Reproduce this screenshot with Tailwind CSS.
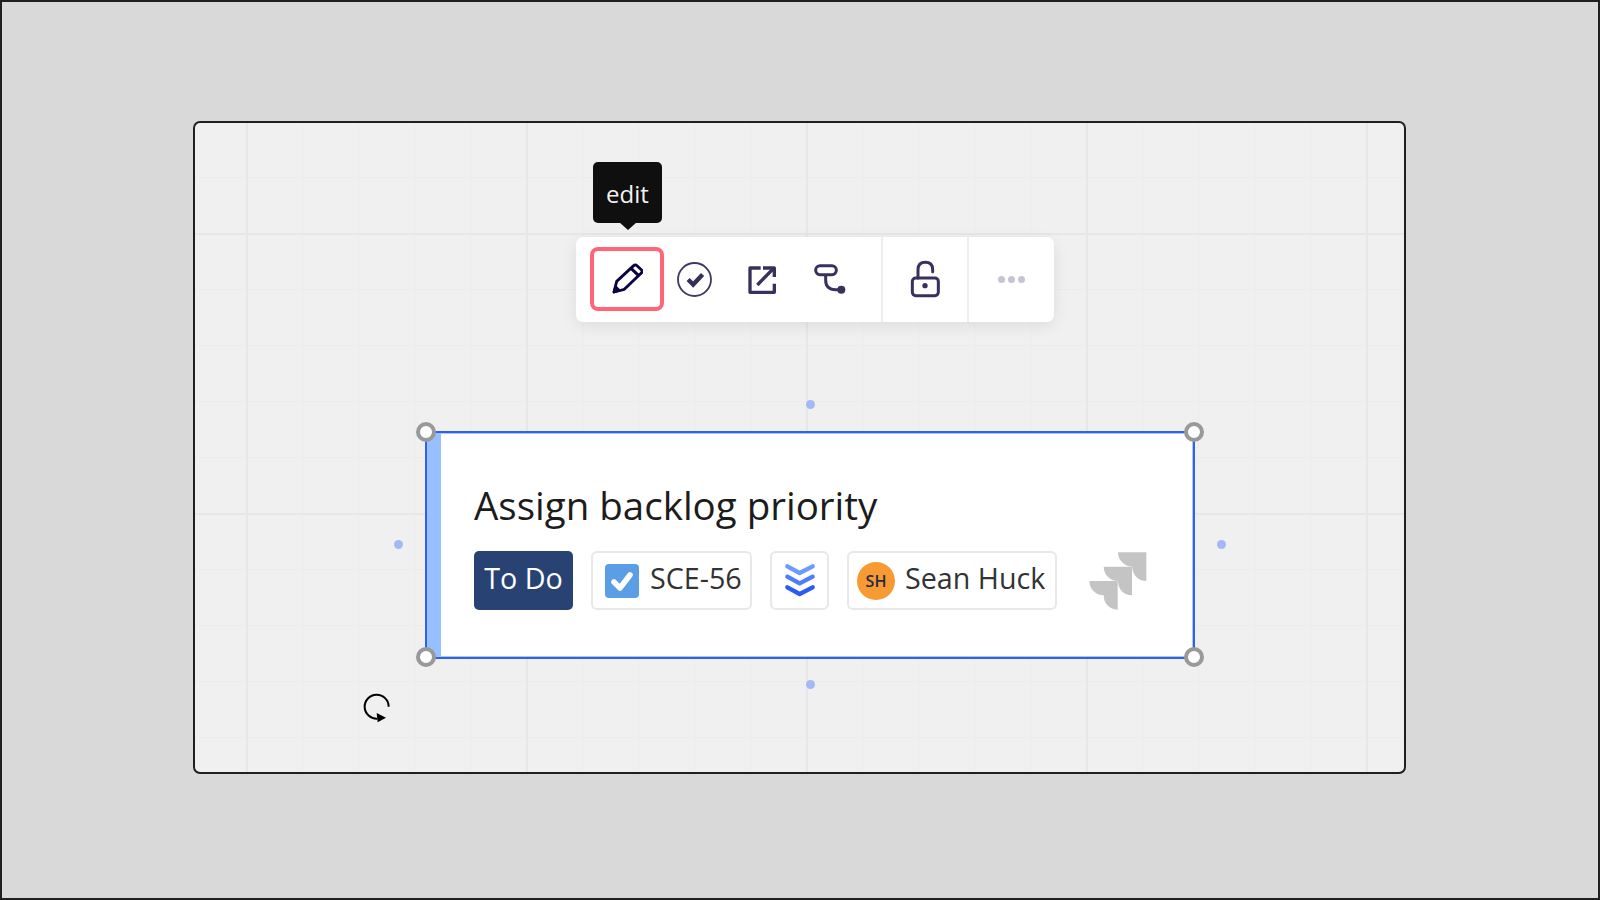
<!DOCTYPE html>
<html lang="en">
<head>
<meta charset="utf-8">
<title>Jira card</title>
<script src="https://cdn.jsdelivr.net/npm/@tailwindcss/browser@4"></script>
</head>
<body class="m-0 overflow-hidden">
<div class="w-[1600px] h-[900px] box-border border-2 border-[#1f1f1f] bg-[#d9d9d9] pt-[119px] pl-[191px] font-['Open_Sans',sans-serif]">
  <div class="relative box-border w-[1213px] h-[653px] border-2 border-[#1f1f1f] rounded-[7px] bg-[#f0f0f0] bg-[linear-gradient(to_right,#e7e7e7_2px,transparent_2px),linear-gradient(to_bottom,#e7e7e7_2px,transparent_2px),linear-gradient(to_right,#ececec_1px,transparent_1px),linear-gradient(to_bottom,#ececec_1px,transparent_1px)] bg-[size:280px_280px,280px_280px,56px_56px,56px_56px] bg-[position:51px_0,0_110px,51px_0,0_54px]">

    <!-- tooltip -->
    <div class="absolute left-[398px] top-[39px] w-[69px] h-[61px] pt-[2px] rounded-[5px] bg-[#0f0f0f] flex items-center justify-center text-[24px] leading-none text-[#f2f2f2]">
      edit
      <div class="absolute left-1/2 -translate-x-1/2 top-[60px] w-0 h-0 border-l-[9px] border-r-[9px] border-t-[8px] border-l-transparent border-r-transparent border-t-[#0f0f0f]"></div>
    </div>

    <!-- toolbar -->
    <div class="absolute left-[381px] top-[114px] w-[478px] h-[85px] rounded-[7px] bg-white shadow-[0_4px_16px_rgba(5,0,56,0.08)] flex">
      <div class="box-border w-[307px] h-full flex items-center pl-[14px] border-r-2 border-[#ededed]">
        <div class="box-border w-[74px] h-[64px] mb-[1px] rounded-[8px] border-[4px] border-[#ff6577] flex items-center justify-center">
          <svg width="32" height="32" viewBox="124 338 96 96" fill="none" stroke="#0a0440" stroke-width="8.5" stroke-linejoin="round"><path d="M133 425 L141 393 L192 346 Q197 341 202 346 L215 358 Q220 363 215 368 L164 417 Z"/><path d="M184 354 L207 376" stroke-width="9"/><path d="M133 425 L138 410 L148 420 Z" fill="#0a0440"/></svg>
        </div>
        <div class="w-[60px] flex justify-center">
          <svg width="35" height="35" viewBox="321 335 104 104" fill="none" stroke="#3f3a66"><circle cx="373" cy="387" r="49" stroke-width="5.5"/><path d="M354 387 L369 402 L397 372" stroke-width="13" stroke="#353059"/></svg>
        </div>
        <div class="w-[4px]"></div>
        <div class="w-[68px] flex justify-center">
          <svg width="28" height="28" viewBox="535 345 84 84" fill="none" stroke="#37325c" stroke-width="10" stroke-linejoin="round"><path d="M573 351 H541 V424 H614 V398"/><path d="M563 402 L610 354"/><path d="M580 351 H614 V378"/></svg>
        </div>
        <div class="w-[68px] flex justify-center">
          <svg width="32" height="32" viewBox="733 344 96 96" fill="none" stroke="#37325c" stroke-width="9"><rect x="738" y="349" width="62" height="27" rx="13"/><path d="M768 376 V392 Q768 421 798 421 H815"/><circle cx="815" cy="421" r="12" fill="#37325c" stroke="none"/></svg>
        </div>
      </div>
      <div class="box-border w-[86px] h-full flex items-center justify-center border-r-2 border-[#ededed]">
        <svg class="mb-[2px]" width="30" height="38" viewBox="182 118 90 114" fill="none" stroke="#37325c" stroke-width="9"><rect x="189" y="172" width="78" height="53" rx="10"/><path d="M206 172 V147 Q206 125 228 125 Q250 125 250 147 V153" stroke-linecap="round"/><circle cx="227" cy="195" r="8" fill="#37325c" stroke="none"/></svg>
      </div>
      <div class="flex-1 h-full flex items-center justify-center gap-[3px]">
        <span class="w-[7px] h-[7px] rounded-full bg-[#c5c4d2]"></span>
        <span class="w-[7px] h-[7px] rounded-full bg-[#c5c4d2]"></span>
        <span class="w-[7px] h-[7px] rounded-full bg-[#c5c4d2]"></span>
      </div>
    </div>

    <!-- side dots -->
    <span class="absolute left-[610.5px] top-[276.5px] w-[9px] h-[9px] rounded-full bg-[#a3b9f7]"></span>
    <span class="absolute left-[610.5px] top-[556.5px] w-[9px] h-[9px] rounded-full bg-[#a3b9f7]"></span>
    <span class="absolute left-[198.5px] top-[416.5px] w-[9px] h-[9px] rounded-full bg-[#a3b9f7]"></span>
    <span class="absolute left-[1021.5px] top-[416.5px] w-[9px] h-[9px] rounded-full bg-[#a3b9f7]"></span>

    <!-- card -->
    <div class="absolute left-[230px] top-[308px] box-border w-[770px] h-[228px] border-2 border-[#2f62e8] bg-white flex shadow-[inset_0_0_0_1px_#a9c6ff]">
      <div class="w-[14px] h-full bg-[#96c0ff] shrink-0"></div>
      <div class="flex flex-col pl-[33px]">
        <div class="mt-[44px] h-[56px] leading-[56px] text-[38.5px] text-[#1c1c1c] whitespace-nowrap">Assign backlog priority</div>
        <div class="mt-[18px] flex items-center gap-[18px]">
          <div class="w-[99px] h-[59px] rounded-[5px] bg-[#284373] text-white text-[28.7px] flex items-center justify-center pb-[6px]">To Do</div>
          <div class="box-border w-[161px] h-[59px] rounded-[6px] border-2 border-[#e8e8e8] text-[#333] text-[28.7px] flex items-center pl-[12px] gap-[11px]">
            <svg width="34" height="34" viewBox="0 0 34 34"><rect width="34" height="34" rx="4" fill="#5a9fe6"/><path d="M9 18 L15 24 L25 11" fill="none" stroke="#fff" stroke-width="5.5" stroke-linecap="round" stroke-linejoin="round"/></svg>
            <span class="pb-[6px]">SCE-56</span>
          </div>
          <div class="box-border w-[59px] h-[59px] rounded-[6px] border-2 border-[#e8e8e8] flex items-center justify-center">
            <svg width="32" height="36" viewBox="134 100 90 108" fill="none" stroke-width="13" stroke-linecap="round" stroke-linejoin="round"><path d="M141 110 L178 130 L217 110" stroke="#6b9bff"/><path d="M141 141 L178 161 L217 141" stroke="#4d7dfa"/><path d="M141 173 L178 193 L217 173" stroke="#2a5cf5"/></svg>
          </div>
          <div class="box-border w-[210px] h-[59px] rounded-[6px] border-2 border-[#e8e8e8] text-[#333] text-[28.7px] flex items-center pl-[8px] gap-[10px]">
            <div class="w-[38px] h-[38px] rounded-full bg-[#f79a33] text-[#1f2a44] text-[16px] font-semibold flex items-center justify-center">SH</div>
            <span class="pb-[6px] whitespace-nowrap">Sean Huck</span>
          </div>
          <svg class="ml-[14px]" width="58" height="58" viewBox="87 426 174 174" fill="#c4c4c4"><path d="M174 427 H259 V513 C235 513 217 495 217 470 C193 470 174 450 174 427 Z"/><path d="M131 470 H216 V556 C192 556 174 538 174 513 C150 513 131 493 131 470 Z"/><path d="M88 513 H173 V599 C149 599 131 581 131 556 C107 556 88 536 88 513 Z"/></svg>
        </div>
      </div>
    </div>

    <!-- handles -->
    <span class="absolute box-border left-[221px] top-[298.5px] w-[20px] h-[20px] rounded-full bg-white border-[4px] border-[#999]"></span>
    <span class="absolute box-border left-[989px] top-[298.5px] w-[20px] h-[20px] rounded-full bg-white border-[4px] border-[#999]"></span>
    <span class="absolute box-border left-[221px] top-[524px] w-[20px] h-[20px] rounded-full bg-white border-[4px] border-[#999]"></span>
    <span class="absolute box-border left-[989px] top-[524px] w-[20px] h-[20px] rounded-full bg-white border-[4px] border-[#999]"></span>

    <!-- rotate -->
    <svg class="absolute left-[166.5px] top-[569px]" width="30" height="32" viewBox="66 96 90 96" fill="none"><path d="M146 140 A36 36 0 1 0 112 176" stroke="#000" stroke-width="6"/><path d="M110 159 L138 173 L113 187 Z" fill="#000"/></svg>
  </div>
</div>
</body>
</html>
